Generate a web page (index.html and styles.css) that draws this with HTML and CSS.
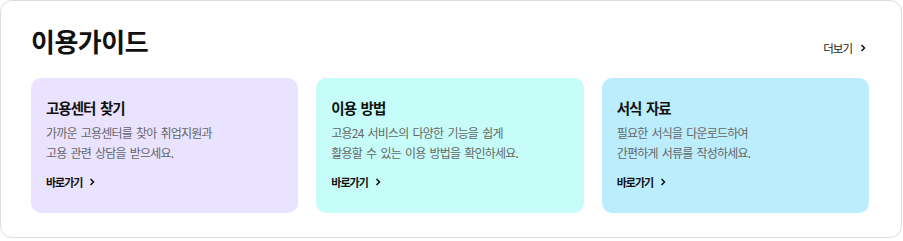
FILE: index.html
```html
<!DOCTYPE html>
<html lang="ko">
<head>
<meta charset="utf-8">
<link rel="stylesheet" href="styles.css">
</head>
<body>
<section class="guide">
  <header class="guide-head">
    <h2 class="guide-title">이용가이드</h2>
    <a class="more" href="#">더보기 <svg class="chev" width="6" height="8" viewBox="0 0 6 8"><path d="M1.5 1 L4.5 4 L1.5 7" fill="none" stroke="#111" stroke-width="1.5"/></svg></a>
  </header>
  <div class="cards">
    <div class="card card-purple">
      <h3 class="card-title">고용센터 찾기</h3>
      <p class="card-desc">가까운 고용센터를 찾아 취업지원과<br>고용 관련 상담을 받으세요.</p>
      <a class="go" href="#">바로가기 <svg class="chev" width="6" height="8" viewBox="0 0 6 8"><path d="M1.5 1 L4.5 4 L1.5 7" fill="none" stroke="#111" stroke-width="1.5"/></svg></a>
    </div>
    <div class="card card-mint">
      <h3 class="card-title">이용 방법</h3>
      <p class="card-desc">고용24 서비스의 다양한 기능을 쉽게<br>활용할 수 있는 이용 방법을 확인하세요.</p>
      <a class="go" href="#">바로가기 <svg class="chev" width="6" height="8" viewBox="0 0 6 8"><path d="M1.5 1 L4.5 4 L1.5 7" fill="none" stroke="#111" stroke-width="1.5"/></svg></a>
    </div>
    <div class="card card-sky">
      <h3 class="card-title">서식 자료</h3>
      <p class="card-desc">필요한 서식을 다운로드하여<br>간편하게 서류를 작성하세요.</p>
      <a class="go" href="#">바로가기 <svg class="chev" width="6" height="8" viewBox="0 0 6 8"><path d="M1.5 1 L4.5 4 L1.5 7" fill="none" stroke="#111" stroke-width="1.5"/></svg></a>
    </div>
  </div>
</section>
</body>
</html>
```

FILE: styles.css
```css
* { box-sizing: border-box; }
html, body { margin: 0; padding: 0; background: #fff; }
body {
  font-family: "Noto Sans CJK KR", "Noto Sans", sans-serif;
  color: #111;
}
.guide {
  width: 902px;
  height: 238px;
  border: 1px solid #dcdcdc;
  border-radius: 12px;
  padding: 22px 32px 24px 30px;
}
.guide-head {
  display: flex;
  align-items: center;
  justify-content: space-between;
  height: 36px;
  margin-bottom: 19px;
}
.guide-title {
  margin: 0;
  font-size: 26px;
  font-weight: 700;
  letter-spacing: -0.5px;
  line-height: 36px;
}
.more {
  display: flex;
  align-items: center;
  gap: 8px;
  font-size: 11.5px;
  letter-spacing: -1px;
  color: #222;
  text-decoration: none;
  margin-top: 14px;
  margin-right: 3px;
}
.cards {
  display: grid;
  grid-template-columns: repeat(3, 1fr);
  gap: 18px;
  height: 135px;
}
.card {
  border-radius: 10px;
  padding: 18px 15px;
}
.card-purple { background: #e9e3ff; }
.card-mint { background: #c6fdf8; }
.card-sky { background: #bcedfc; }
.card-title {
  margin: 0;
  font-size: 14.5px;
  font-weight: 700;
  line-height: 24px;
  letter-spacing: -1px;
  word-spacing: 1.5px;
}
.card-desc {
  margin: 3px 0 0;
  font-size: 12px;
  line-height: 20px;
  letter-spacing: -0.8px;
  word-spacing: 1.5px;
  color: #666;
}
.go {
  display: inline-flex;
  align-items: center;
  gap: 7px;
  margin-top: 11px;
  font-size: 11px;
  font-weight: 700;
  letter-spacing: -1px;
  color: #111;
  text-decoration: none;
}
.chev { display: block; }
```
